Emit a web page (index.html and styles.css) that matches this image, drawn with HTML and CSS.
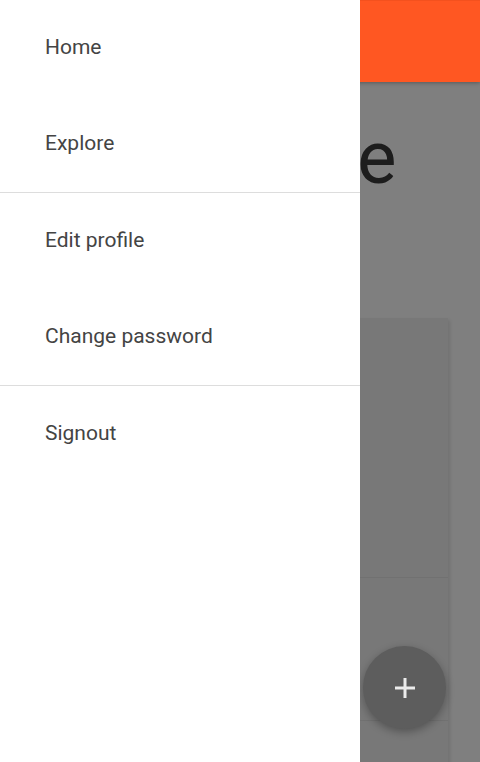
FILE: index.html
```html
<!DOCTYPE html>
<html>
<head>
<meta charset="utf-8">
<link rel="stylesheet" href="styles.css">
</head>
<body>
<div class="page">
  <header class="appbar"></header>
  <main class="content">
    <h1 class="title">Welcome</h1>
    <div class="card">
      <div class="card-item tall"></div>
      <div class="card-item mid"></div>
      <div class="card-item"></div>
    </div>
  </main>
</div>
<div class="overlay"></div>
<button class="fab" aria-label="Add">
  <svg width="22" height="22" viewBox="0 0 22 22"><path d="M11 1v20M1 11h20" stroke="#ececec" stroke-width="3" fill="none"/></svg>
</button>
<nav class="drawer">
  <ul class="menu">
    <li class="menu-item">Home</li>
    <li class="menu-item">Explore</li>
  </ul>
  <hr class="divider">
  <ul class="menu">
    <li class="menu-item">Edit profile</li>
    <li class="menu-item">Change password</li>
  </ul>
  <hr class="divider">
  <ul class="menu">
    <li class="menu-item">Signout</li>
  </ul>
</nav>
</body>
</html>
```

FILE: styles.css
```css
html, body {
  margin: 0;
  padding: 0;
}
body {
  width: 480px;
  height: 762px;
  overflow: hidden;
  position: relative;
  font-family: Roboto, "Noto Sans", sans-serif;
  background: #ffffff;
}
.page {
  height: 762px;
  overflow: hidden;
  display: flex;
  flex-direction: column;
}
.appbar {
  position: relative;
  z-index: 2;
  height: 82px;
  flex: none;
  background: #ff5722;
  border-top: 1px solid #f4511e;
  box-sizing: border-box;
  box-shadow: 0 1px 4px rgba(0,0,0,0.3);
}
.content {
  padding: 0 32px;
}
.title {
  margin: 31px 0 0;
  padding-left: 6px;
  font-weight: 400;
  font-size: 74px;
  line-height: 90px;
  text-align: center;
  color: #3a3a3a;
}
.card {
  margin-top: 115px;
  background: #f0f0f0;
  box-shadow: 2px 2px 4px rgba(0,0,0,0.12);
}
.card-item {
  height: 142px;
  border-bottom: 1px solid #e2e2e2;
}
.card-item.tall {
  height: 259px;
}
.overlay {
  position: absolute;
  inset: 0;
  z-index: 1;
  background: rgba(0,0,0,0.5);
}
.fab {
  position: absolute;
  z-index: 2;
  right: 34px;
  bottom: 33px;
  width: 83px;
  height: 83px;
  border-radius: 50%;
  border: none;
  padding: 0;
  background: #5d5d5d;
  box-shadow: 0 3px 8px rgba(0,0,0,0.3);
  display: flex;
  align-items: center;
  justify-content: center;
}
.fab svg {
  display: block;
}
.drawer {
  position: absolute;
  z-index: 3;
  top: 0;
  left: 0;
  bottom: 0;
  width: 360px;
  background: #ffffff;
}
.menu {
  list-style: none;
  margin: 0;
  padding: 0;
}
.menu-item {
  height: 96px;
  display: flex;
  align-items: center;
  padding-left: 45px;
  padding-bottom: 2px;
  box-sizing: border-box;
  font-size: 21px;
  color: #444444;
}
.divider {
  margin: 0;
  border: none;
  border-top: 1px solid #dddddd;
  height: 0;
}
```
